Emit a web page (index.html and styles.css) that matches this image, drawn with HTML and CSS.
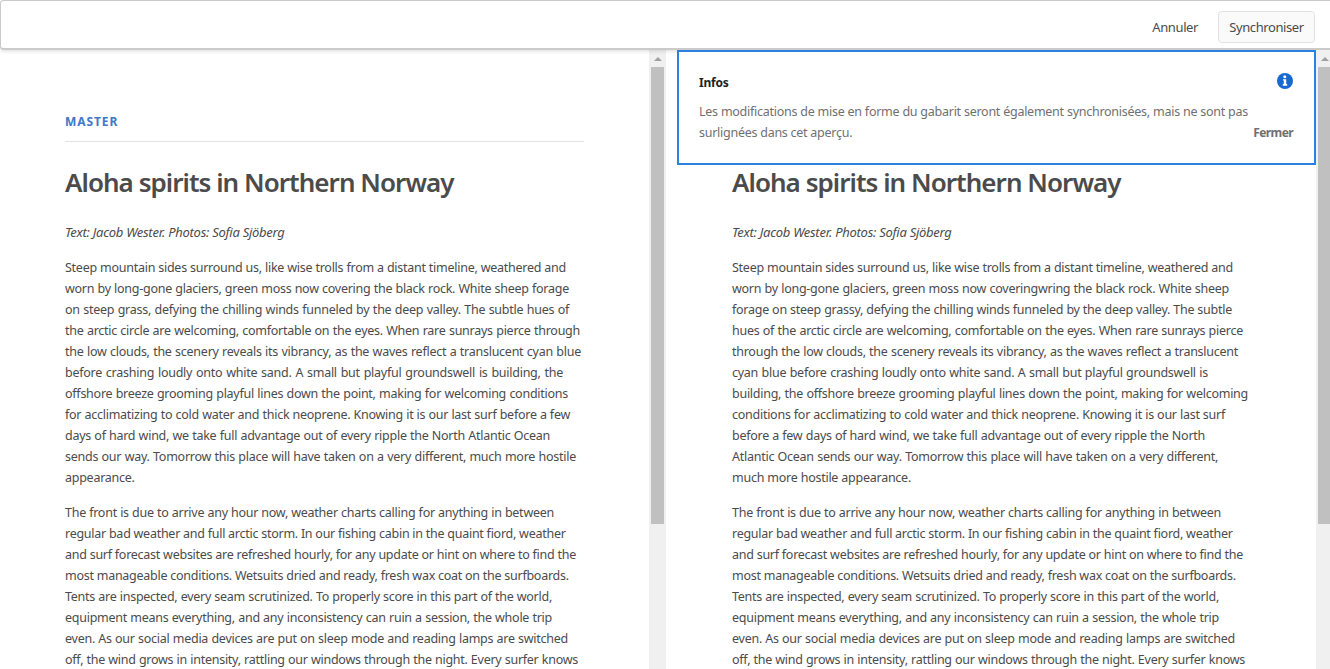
FILE: index.html
```html
<!DOCTYPE html>
<html lang="fr">
<head>
<meta charset="utf-8">
<title>Synchroniser</title>
<link rel="stylesheet" href="styles.css">
</head>
<body>
<header class="toolbar">
  <button class="btn btn-quiet"><span class="label">Annuler</span></button>
  <button class="btn btn-outline"><span class="label">Synchroniser</span></button>
</header>
<main class="panes">
  <section class="pane">
    <article class="content">
      <div class="tag">MASTER</div>
      <h1>Aloha spirits in Northern Norway</h1>
      <p class="byline">Text: Jacob Wester. Photos: Sofia Sjöberg</p>
      <p class="copy">
        <span style="width:501px">Steep mountain sides surround us, like wise trolls from a distant timeline, weathered and</span>
        <span style="width:504px">worn by long-gone glaciers, green moss now covering the black rock. White sheep forage</span>
        <span style="width:504px">on steep grass, defying the chilling winds funneled by the deep valley. The subtle hues of</span>
        <span style="width:515px">the arctic circle are welcoming, comfortable on the eyes. When rare sunrays pierce through</span>
        <span style="width:516px">the low clouds, the scenery reveals its vibrancy, as the waves reflect a translucent cyan blue</span>
        <span style="width:498px">before crashing loudly onto white sand. A small but playful groundswell is building, the</span>
        <span style="width:503px">offshore breeze grooming playful lines down the point, making for welcoming conditions</span>
        <span style="width:505px">for acclimatizing to cold water and thick neoprene. Knowing it is our last surf before a few</span>
        <span style="width:485px">days of hard wind, we take full advantage out of every ripple the North Atlantic Ocean</span>
        <span style="width:511px">sends our way. Tomorrow this place will have taken on a very different, much more hostile</span>
        <span style="width:68px">appearance.</span>
      </p>
      <p class="copy">
        <span style="width:489px">The front is due to arrive any hour now, weather charts calling for anything in between</span>
        <span style="width:500px">regular bad weather and full arctic storm. In our fishing cabin in the quaint fiord, weather</span>
        <span style="width:511px">and surf forecast websites are refreshed hourly, for any update or hint on where to find the</span>
        <span style="width:503px">most manageable conditions. Wetsuits dried and ready, fresh wax coat on the surfboards.</span>
        <span style="width:487px">Tents are inspected, every seam scrutinized. To properly score in this part of the world,</span>
        <span style="width:487px">equipment means everything, and any inconsistency can ruin a session, the whole trip</span>
        <span style="width:503px">even. As our social media devices are put on sleep mode and reading lamps are switched</span>
        <span style="width:513px">off, the wind grows in intensity, rattling our windows through the night. Every surfer knows</span>
      </p>
    </article>
    <div class="scrollbar"><i class="arrow"></i><i class="thumb"></i></div>
  </section>
  <section class="pane pane-live">
    <article class="content">
      <h1>Aloha spirits in Northern Norway</h1>
      <p class="byline">Text: Jacob Wester. Photos: Sofia Sjöberg</p>
      <p class="copy">
        <span style="width:501px">Steep mountain sides surround us, like wise trolls from a distant timeline, weathered and</span>
        <span style="width:497px">worn by long-gone glaciers, green moss now coveringwring the black rock. White sheep</span>
        <span style="width:500px">forage on steep grassy, defying the chilling winds funneled by the deep valley. The subtle</span>
        <span style="width:511px">hues of the arctic circle are welcoming, comfortable on the eyes. When rare sunrays pierce</span>
        <span style="width:506px">through the low clouds, the scenery reveals its vibrancy, as the waves reflect a translucent</span>
        <span style="width:476px">cyan blue before crashing loudly onto white sand. A small but playful groundswell is</span>
        <span style="width:516px">building, the offshore breeze grooming playful lines down the point, making for welcoming</span>
        <span style="width:493px">conditions for acclimatizing to cold water and thick neoprene. Knowing it is our last surf</span>
        <span style="width:473px">before a few days of hard wind, we take full advantage out of every ripple the North</span>
        <span style="width:486px">Atlantic Ocean sends our way. Tomorrow this place will have taken on a very different,</span>
        <span style="width:179px">much more hostile appearance.</span>
      </p>
      <p class="copy">
        <span style="width:489px">The front is due to arrive any hour now, weather charts calling for anything in between</span>
        <span style="width:500px">regular bad weather and full arctic storm. In our fishing cabin in the quaint fiord, weather</span>
        <span style="width:511px">and surf forecast websites are refreshed hourly, for any update or hint on where to find the</span>
        <span style="width:503px">most manageable conditions. Wetsuits dried and ready, fresh wax coat on the surfboards.</span>
        <span style="width:487px">Tents are inspected, every seam scrutinized. To properly score in this part of the world,</span>
        <span style="width:487px">equipment means everything, and any inconsistency can ruin a session, the whole trip</span>
        <span style="width:503px">even. As our social media devices are put on sleep mode and reading lamps are switched</span>
        <span style="width:513px">off, the wind grows in intensity, rattling our windows through the night. Every surfer knows</span>
      </p>
    </article>
    <div class="scrollbar"><i class="arrow"></i><i class="thumb"></i></div>
    <aside class="notice">
      <div class="notice-head">
        <strong>Infos</strong>
        <svg width="16" height="16" viewBox="0 0 16 16"><circle cx="8" cy="8" r="8" fill="#1769d2"/><circle cx="7.8" cy="3.8" r="1.5" fill="#fff"/><path d="M6 6.2h3.2v4.9h1v1.6H5.8v-1.6h1V7.6H6z" fill="#fff"/></svg>
      </div>
      <p class="notice-text">
        <span style="width:549px">Les modifications de mise en forme du gabarit seront également synchronisées, mais ne sont pas</span>
        <span style="width:152px">surlignées dans cet aperçu.</span>
      </p>
      <button class="close">Fermer</button>
    </aside>
  </section>
</main>
</body>
</html>
```
FILE: styles.css
```css
* { box-sizing: border-box; }
body {
  margin: 0;
  height: 669px;
  overflow: hidden;
  display: flex;
  flex-direction: column;
  background: #fff;
  color: #4b4b4b;
  font: 13px/21px "Noto Sans", "Open Sans", sans-serif;
  letter-spacing: -0.5px;
}
button { font: inherit; letter-spacing: inherit; color: inherit; background: none; border: 0; padding: 0; }
.toolbar {
  position: relative;
  z-index: 2;
  flex: none;
  height: 50px;
  display: flex;
  justify-content: flex-end;
  gap: 9px;
  padding: 10px 15px 0;
  border: 1px solid #cacaca;
  border-right: 0;
  border-bottom-width: 2px;
  border-radius: 4px 0 0 4px;
  background: #fff;
  box-shadow: 0 1px 4px rgba(0, 0, 0, .15);
}
.btn { height: 32px; padding: 0 10px; border: 1px solid transparent; border-radius: 4px; letter-spacing: -0.4px; }
.btn-outline { width: 97px; padding: 0; border-color: #e1e1e1; background: #fafafa; }
.panes { flex: 1; min-height: 0; display: grid; grid-template-columns: 667px 663px; }
.pane { position: relative; display: flex; overflow: hidden; }
.pane-live { z-index: 3; }
.content { flex: 1; min-width: 0; padding: 61px 0 0 65px; }
.pane-live .content { padding-top: 112px; }
.tag {
  width: 519px;
  height: 31px;
  border-bottom: 1px solid #e3e3e3;
  color: #4178c8;
  font-size: 12px;
  font-weight: 700;
  letter-spacing: .9px;
}
h1 { margin: 20px 0 0; font-size: 26px; line-height: 40px; font-weight: 600; letter-spacing: -0.96px; white-space: nowrap; }
.pane-live h1 { margin-top: 0; }
.byline { margin: 20px 0 14px; font-style: italic; letter-spacing: -0.27px; }
.copy { margin: 0 0 14px; }
.copy span, .notice-text span { display: block; white-space: nowrap; text-align: justify; text-align-last: justify; font-size: 12.5px; letter-spacing: -0.26px; }
.scrollbar {
  flex: none;
  width: 17px;
  margin-right: 1px;
  padding: 7px 2px 0;
  background: #f0f0f0;
}
.pane-live .scrollbar { width: 14px; margin: 0; padding-right: 0; }
.arrow { display: block; width: 0; margin-left: 3px; border: 4px solid transparent; border-top: 0; border-bottom-color: #a0a0a0; }
.thumb { display: block; width: 13px; height: 457px; margin-top: 6px; background: #c0c0c0; }
.notice {
  position: absolute;
  left: 10px;
  top: 0;
  width: 639px;
  height: 115px;
  padding: 20px 21px 0 20px;
  border: 2px solid #2c80e0;
  background: #fff;
  color: #707070;
}
.notice-head { display: flex; justify-content: space-between; align-items: flex-start; height: 29px; color: #222; font-size: 12px; letter-spacing: -0.2px; }
.notice-head svg { margin-top: 1px; }
.notice-text { margin: 0; }
.close { position: absolute; right: 21px; bottom: 20px; font-size: 12px; font-weight: 700; letter-spacing: -0.6px; }
```
